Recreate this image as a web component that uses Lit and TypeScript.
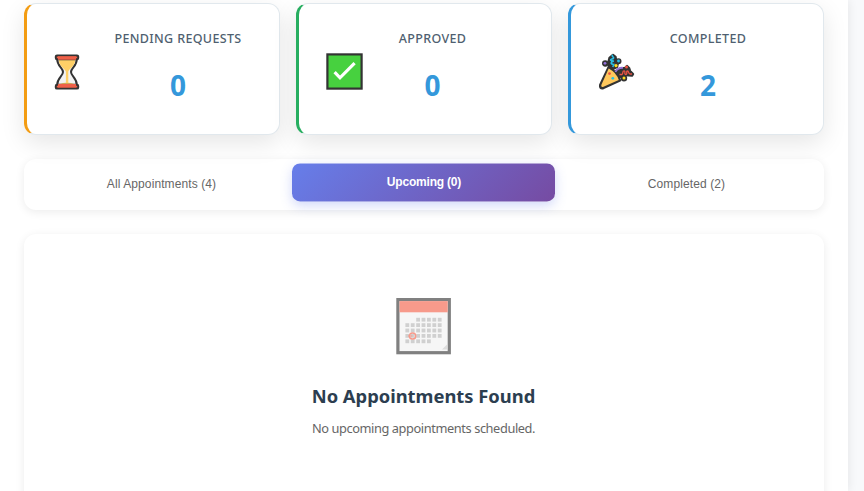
import { LitElement, html, css, svg } from "lit";
import { customElement, property } from "lit/decorators.js";

const hourglass = html`<svg width="26" height="36" viewBox="0 0 26 36">
  <path d="M3.2 5C3 12 9 14 9 18S3 24 3.2 31H22.8C23 24 17 22 17 18S23 12 22.8 5Z" fill="#f2f2f2" stroke="#333" stroke-width="2"/>
  <path d="M4.8 6H21.2C21.2 12 15.8 14 14.3 17.5V30H11.9V17.5C10.2 14 4.8 12 4.8 6Z" fill="#ffd067"/>
  <path d="M5 30.2Q13 27 21 30.2Z" fill="#ffd067"/>
  <rect x="1.8" y="1.4" width="22.4" height="3.8" rx="1.2" fill="#ef6048" stroke="#333" stroke-width="2"/>
  <rect x="1.8" y="30.8" width="22.4" height="3.8" rx="1.2" fill="#ef6048" stroke="#333" stroke-width="2"/>
  <path d="M4 4H22M4 31.8H22" stroke="#ef6048" stroke-width="3.4"/>
</svg>`;

const check = html`<svg width="37" height="37" viewBox="0 0 37 37">
  <rect x="1.4" y="1.4" width="34.2" height="34.2" fill="#47d13f" stroke="#333" stroke-width="2.2"/>
  <path d="M8.6 19.2L14 24.8L28.6 10.2" fill="none" stroke="#fff" stroke-width="3.2"/>
</svg>`;

const party = html`<svg width="37" height="37" viewBox="0 0 37 37">
  <g fill="#333" stroke="#333" stroke-width="2.4" stroke-linejoin="round">
    <path d="M10.5 14.5L2.2 32Q1.5 36 5.5 35L22 27.5Q20 19 10.5 14.5Z"/>
    <path d="M11 14L10.5 9L11.5 5L15 2L17.5 4L18 7L20 9L19 14L15 16Z"/>
    <path d="M18 18L23 15.5L27 15L29 13L31 15L32 18L35 21L34 22.5L27 22L22 24Z"/>
    <circle cx="7.2" cy="10.5" r="2"/><circle cx="20.5" cy="8.2" r="1.8"/><circle cx="26" cy="25.2" r="2"/>
  </g>
  <path d="M10.7 15.4L3.3 32Q2.7 34.6 5.5 33.8L20.8 27Q18.5 19.5 10.7 15.4Z" fill="#ffc85c"/>
  <path d="M14.8 1.8C12.6 3.4 16.8 4 15.2 5.6C11.2 6.6 12.2 8 15.8 8C12.2 9.3 12.2 11 15.8 11.5L14.8 14" fill="none" stroke="#27bfe5" stroke-width="1.6"/>
  <path d="M17.5 19C19 15.5 21 14.5 25 14.8" fill="none" stroke="#9470d8" stroke-width="1.8"/>
  <path d="M21.5 21.5H24C25.5 21 24 17.8 26 17.8S25.8 21.5 27.8 21.5S27.8 18 29.5 18S30 21.5 32.5 21H34" fill="none" stroke="#ed5444" stroke-width="1.3"/>
  <circle cx="7" cy="10.3" r="1.4" fill="#9470d8"/><circle cx="20.5" cy="8" r="1.4" fill="#27bfe5"/>
  <circle cx="18" cy="12.6" r="1.6" fill="#ffdc20"/><circle cx="26" cy="25" r="1.5" fill="#ffdc20"/>
  <circle cx="28.5" cy="14" r="1.5" fill="#ed5444"/><circle cx="11.5" cy="20.6" r="1.4" fill="#ed5444"/>
  <circle cx="14.8" cy="25.3" r="1.4" fill="#27bfe5"/>
</svg>`;

const dayCells = [0, 1, 2, 3, 4].flatMap((row) =>
  [0, 1, 2, 3, 4, 5, 6]
    .filter((col) => !(row === 0 && col < 2) && !(row === 4 && col > 4))
    .map((col) => svg`<rect x=${9.4 + col * 5.4} y=${19.8 + row * 5.4} width="3.8" height="3.8" fill="#d0d0d0"/>`),
);

const calendar = html`<svg width="55" height="57" viewBox="0 0 55 57">
  <rect x="1.9" y="1.5" width="51.4" height="53.2" fill="#f6f6f6" stroke="#808080" stroke-width="3.2"/>
  <rect x="3.5" y="3.1" width="48.2" height="11.2" fill="#f79a8b"/>
  ${dayCells}
  <circle cx="16.6" cy="38" r="3.1" fill="none" stroke="#f79a8b" stroke-width="1.5"/>
  <path d="M12 38H16.5" stroke="#f79a8b" stroke-width="1"/>
  <path d="M46 51.6L51 46.6V51.6Z" fill="#dcdcdc"/>
</svg>`;

@customElement("stat-card")
class StatCard extends LitElement {
  @property() label = "";
  @property() value = "";
  @property() icon: unknown;

  static styles = css`
    :host {
      display: flex;
      box-sizing: border-box;
      height: 132px;
      background: #fff;
      border: 1px solid #e1e8ed;
      border-left: 3px solid var(--accent);
      border-radius: 12px;
      box-shadow: 0 8px 25px rgba(0, 0, 0, 0.1);
    }
    .icon {
      flex: none;
      display: flex;
      align-items: center;
      justify-content: center;
      width: 37px;
      height: 37px;
      margin: 49px 0 0 var(--icon-left);
    }
    .info {
      flex: none;
      width: 130px;
      margin-left: var(--info-left);
      text-align: center;
      white-space: nowrap;
    }
    .label {
      margin-top: 25px;
      font-size: 12.5px;
      line-height: 20px;
      font-weight: 500;
      letter-spacing: 0.35px;
      color: #4f5f70;
    }
    .value {
      margin-top: 16px;
      font-size: 28px;
      line-height: 40px;
      font-weight: 700;
      color: #3498db;
    }
  `;

  render() {
    return html`<div class="icon">${this.icon}</div>
      <div class="info">
        <div class="label">${this.label}</div>
        <div class="value">${this.value}</div>
      </div>`;
  }
}

@customElement("app-root")
class AppRoot extends LitElement {
  static styles = css`
    :host {
      display: block;
      height: 491px;
      overflow: hidden;
      background: #f8f9fb;
      font-family: "Noto Sans", sans-serif;
    }
    .page {
      box-sizing: border-box;
      width: 848px;
      height: 491px;
      padding: 3px 24px 0;
      background: #fff;
      box-shadow: 0 0 10px rgba(0, 0, 0, 0.09);
    }
    .stats {
      display: grid;
      grid-template-columns: repeat(3, 256px);
      gap: 16px;
    }
    .pending {
      --accent: #f39c12;
      --icon-left: 21px;
      --info-left: 28px;
    }
    .approved {
      --accent: #27ae60;
      --icon-left: 27px;
      --info-left: 4.5px;
    }
    .completed {
      --accent: #3498db;
      --icon-left: 27px;
      --info-left: 8px;
    }
    .tabs {
      display: grid;
      grid-template-columns: repeat(3, 263px);
      box-sizing: border-box;
      height: 51px;
      margin-top: 24px;
      padding: 6px 5px 7px;
      border-radius: 12px;
      background: #fff;
      box-shadow: 0 2px 10px rgba(0, 0, 0, 0.08);
    }
    .tab {
      padding: 0;
      border: 0;
      border-radius: 8px;
      background: none;
      color: #666;
      font: 12px/38px "Liberation Sans", Arial, sans-serif;
      letter-spacing: 0.1px;
    }
    .tab:first-child {
      padding-left: 2px;
    }
    .active {
      padding-left: 1px;
      transform: translateY(-1.6px);
      background: linear-gradient(135deg, #667eea 0%, #764ba2 100%);
      box-shadow: 0 4px 12px rgba(102, 126, 234, 0.3);
      color: #fff;
      font-weight: 700;
      letter-spacing: -0.2px;
    }
    .empty {
      display: flex;
      flex-direction: column;
      align-items: center;
      box-sizing: border-box;
      height: 290px;
      margin-top: 24px;
      padding: 64px 1px 0 0;
      border-radius: 12px;
      background: #fff;
      box-shadow: 0 2px 10px rgba(0, 0, 0, 0.08);
    }
    .calendar {
      width: 55px;
      height: 57px;
    }
    h3 {
      margin: 27px 0 0;
      font-size: 18.35px;
      line-height: 28px;
      font-weight: 700;
      color: #2c3e50;
    }
    p {
      margin: 8px 0 0;
      font-size: 12.8px;
      line-height: 20px;
      letter-spacing: -0.41px;
      color: #666;
    }
  `;

  render() {
    return html`<main class="page">
      <section class="stats">
        <stat-card class="pending" label="PENDING REQUESTS" value="0" .icon=${hourglass}></stat-card>
        <stat-card class="approved" label="APPROVED" value="0" .icon=${check}></stat-card>
        <stat-card class="completed" label="COMPLETED" value="2" .icon=${party}></stat-card>
      </section>
      <nav class="tabs">
        <button class="tab">All Appointments (4)</button>
        <button class="tab active">Upcoming (0)</button>
        <button class="tab">Completed (2)</button>
      </nav>
      <section class="empty">
        <div class="calendar">${calendar}</div>
        <h3>No Appointments Found</h3>
        <p>No upcoming appointments scheduled.</p>
      </section>
    </main>`;
  }
}
